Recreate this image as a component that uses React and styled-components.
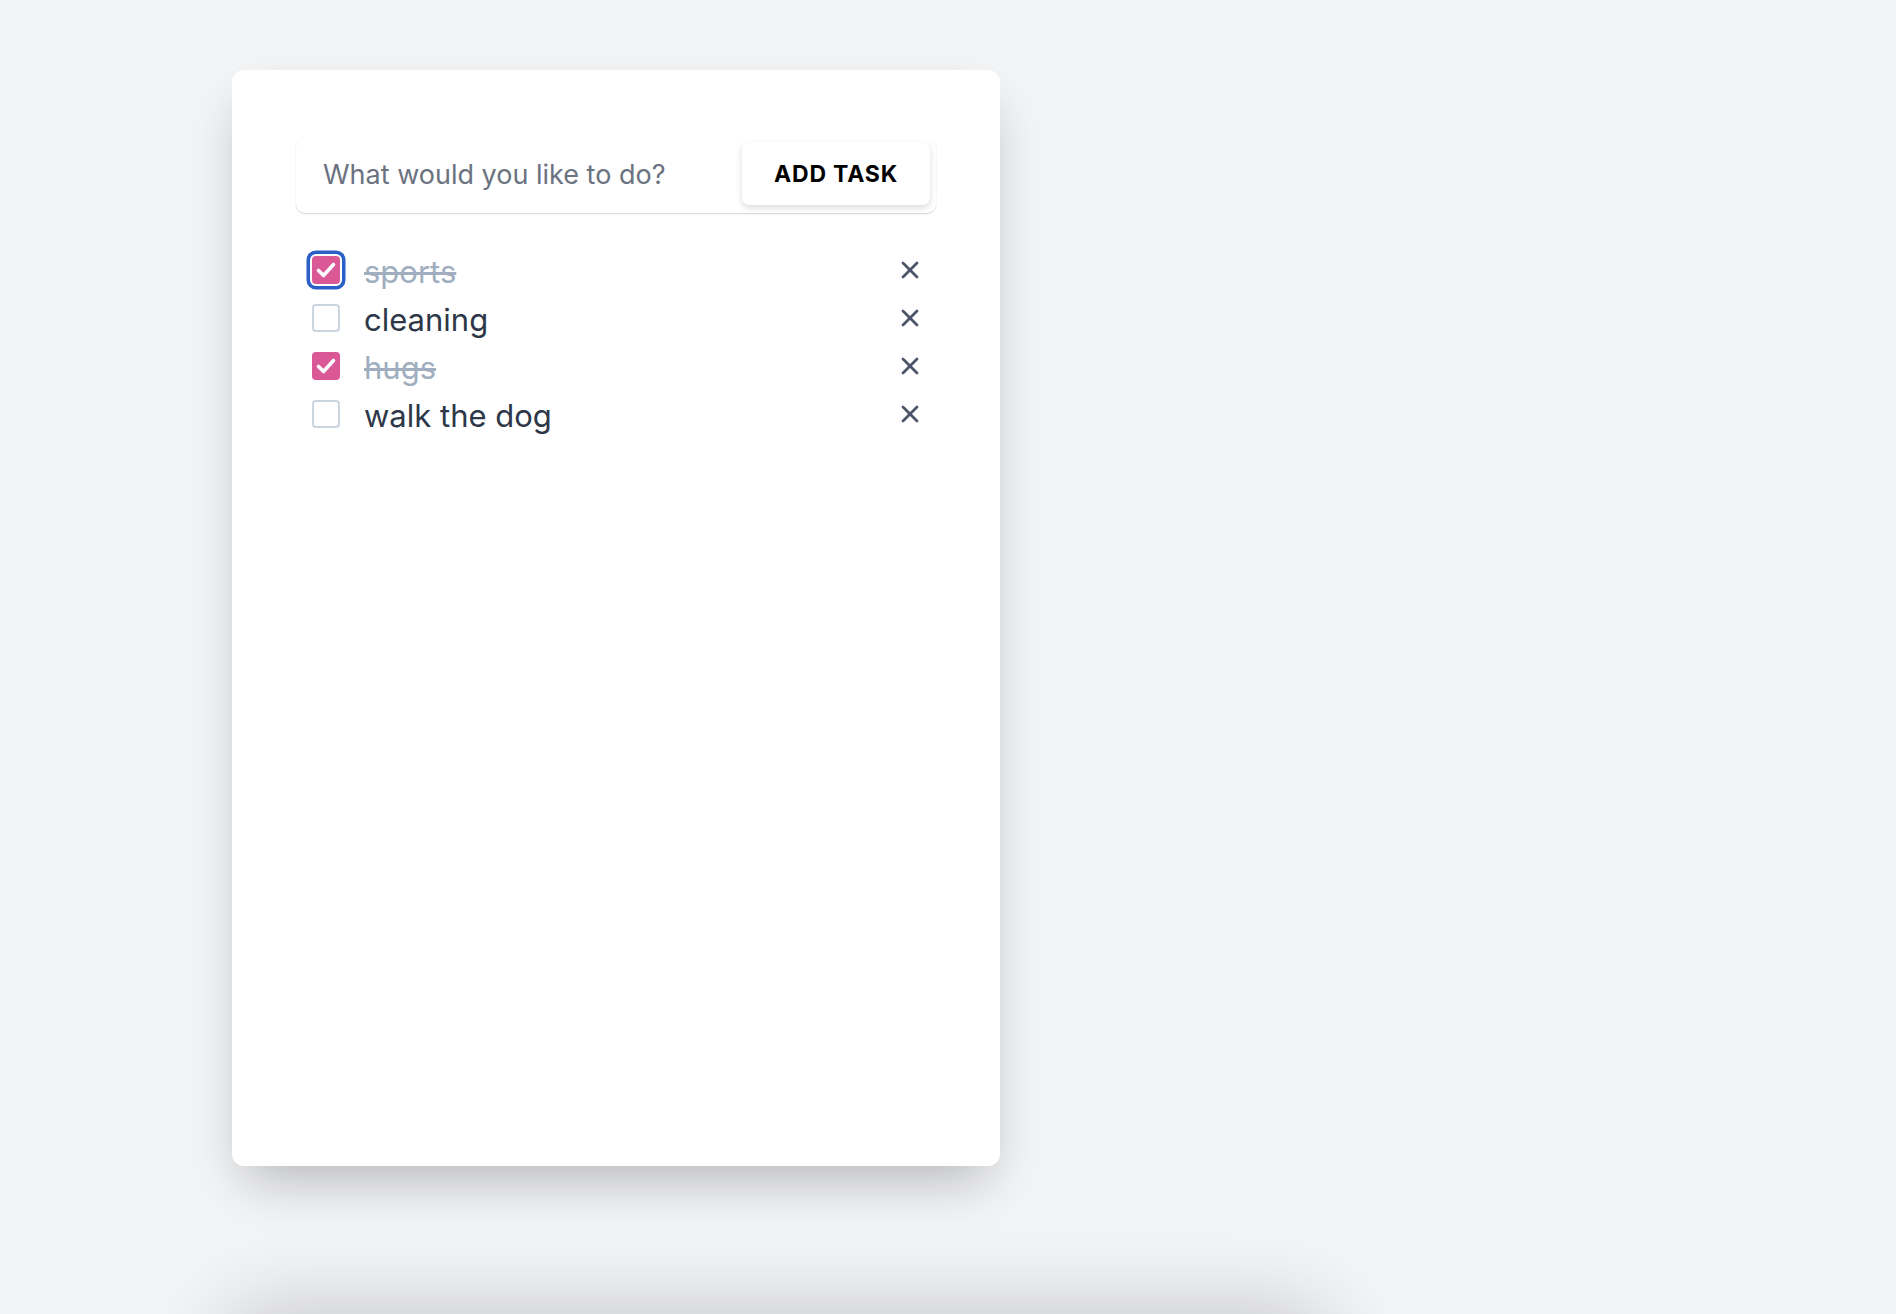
import { useState } from 'react';
import styled, { createGlobalStyle } from 'styled-components';

const GlobalStyle = createGlobalStyle`
  html, body {
    margin: 0;
    padding: 0;
    background: #f3f4f6;
  }
  * {
    box-sizing: border-box;
  }
`;

const Page = styled.div`
  height: 100vh;
  overflow: hidden;
  display: flex;
  flex-direction: column;
  align-items: flex-start;
  padding: 70px 0 0 232px;
  background: #f3f4f6;
  font-family: Inter, 'Noto Sans', sans-serif;
`;

const Card = styled.div`
  flex-shrink: 0;
  width: 768px;
  height: 1096px;
  padding: 68px 64px;
  background: #ffffff;
  border-radius: 12px;
  box-shadow: 0 25px 50px -12px rgba(0, 0, 0, 0.25);
`;

const Form = styled.form`
  display: flex;
  align-items: flex-start;
  height: 75px;
  padding: 4px 6px 0 0;
  border-radius: 9px;
  box-shadow: 0 1px 1.5px rgba(0, 0, 0, 0.16), 0 0 0.5px rgba(0, 0, 0, 0.06);
`;

const Input = styled.input`
  flex: 1;
  min-width: 0;
  height: 63px;
  padding: 2px 0 0 27px;
  border: none;
  outline: none;
  background: transparent;
  font-family: Inter, 'Noto Sans', sans-serif;
  font-size: 27px;
  color: #374151;

  &::placeholder {
    color: #6b7280;
  }
`;

const AddButton = styled.button`
  flex-shrink: 0;
  width: 188px;
  height: 63px;
  border: none;
  border-radius: 8px;
  background: #ffffff;
  box-shadow: 0 3px 7px rgba(0, 0, 0, 0.14);
  font-family: Inter, 'Noto Sans', sans-serif;
  font-size: 23px;
  font-weight: 700;
  letter-spacing: 0.8px;
  color: #000000;
  cursor: pointer;
`;

const List = styled.ul`
  list-style: none;
  margin: 33px 0 0;
  padding: 0 16px;
`;

const Row = styled.li`
  display: flex;
  align-items: center;
  height: 48px;
`;

const Box = styled.button`
  flex-shrink: 0;
  display: flex;
  align-items: center;
  justify-content: center;
  width: 28px;
  height: 28px;
  padding: 0;
  border-radius: 4px;
  border: ${(p) => (p.$checked ? 'none' : '2px solid #cbd5e0')};
  background: ${(p) => (p.$checked ? '#db5897' : '#ffffff')};
  box-shadow: ${(p) => (p.$focused ? '0 0 0 2px #ffffff, 0 0 0 5.5px #2b5fc8' : 'none')};
  cursor: pointer;
  outline: none;
`;

const Label = styled.span`
  flex: 1;
  margin-left: 24px;
  font-size: 31px;
  line-height: 1;
  padding-top: 3px;
  color: ${(p) => (p.$done ? '#a0aec0' : '#2d3748')};
  text-decoration: ${(p) => (p.$done ? 'line-through' : 'none')};
  text-decoration-thickness: 2.5px;
`;

const Remove = styled.button`
  flex-shrink: 0;
  display: flex;
  margin-right: 1px;
  padding: 0;
  border: none;
  background: none;
  cursor: pointer;
`;

const Below = styled.div`
  flex-shrink: 0;
  width: 1090px;
  height: 300px;
  margin: 150px 0 0 0;
  border-radius: 12px;
  background: #ffffff;
  box-shadow: 0 0 90px rgba(0, 0, 0, 0.22);
`;

const CheckIcon = () => (
  <svg width="28" height="28" viewBox="0 0 28 28">
    <path d="M6.5 14.5 L11.5 19.5 L21.5 8.5" fill="none" stroke="#ffffff" strokeWidth="3.6" strokeLinecap="round" strokeLinejoin="round" />
  </svg>
);

const CrossIcon = () => (
  <svg width="18" height="18" viewBox="0 0 18 18">
    <path d="M2 2 L16 16 M16 2 L2 16" fill="none" stroke="#4a5568" strokeWidth="2.8" strokeLinecap="round" />
  </svg>
);

const initialTasks = [
  { id: 1, text: 'sports', done: true },
  { id: 2, text: 'cleaning', done: false },
  { id: 3, text: 'hugs', done: true },
  { id: 4, text: 'walk the dog', done: false },
];

export default function App() {
  const [tasks, setTasks] = useState(initialTasks);
  const [value, setValue] = useState('');

  const addTask = (e) => {
    e.preventDefault();
    if (!value.trim()) return;
    setTasks([...tasks, { id: Date.now(), text: value.trim(), done: false }]);
    setValue('');
  };

  const toggle = (id) => setTasks(tasks.map((t) => (t.id === id ? { ...t, done: !t.done } : t)));
  const remove = (id) => setTasks(tasks.filter((t) => t.id !== id));

  return (
    <>
      <GlobalStyle />
      <Page>
        <Card>
          <Form onSubmit={addTask}>
            <Input
              placeholder="What would you like to do?"
              value={value}
              onChange={(e) => setValue(e.target.value)}
            />
            <AddButton type="submit">ADD TASK</AddButton>
          </Form>
          <List>
            {tasks.map((t, i) => (
              <Row key={t.id}>
                <Box $checked={t.done} $focused={i === 0} onClick={() => toggle(t.id)}>
                  {t.done && <CheckIcon />}
                </Box>
                <Label $done={t.done}>{t.text}</Label>
                <Remove onClick={() => remove(t.id)}>
                  <CrossIcon />
                </Remove>
              </Row>
            ))}
          </List>
        </Card>
        <Below />
      </Page>
    </>
  );
}
